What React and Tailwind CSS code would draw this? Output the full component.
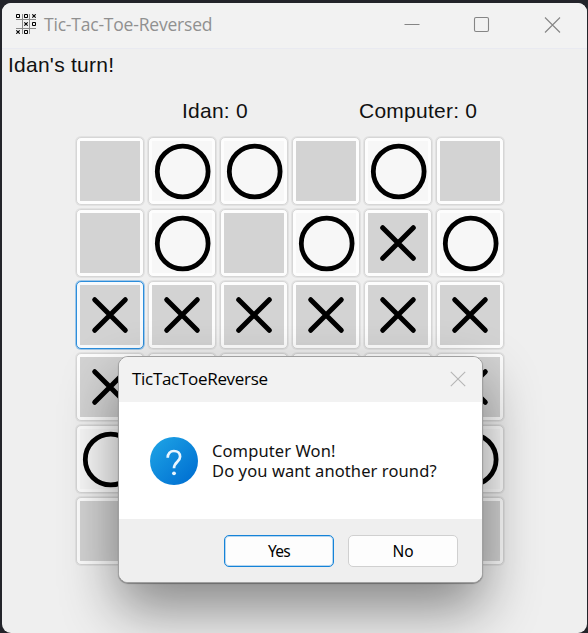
import React from 'react';

const board = [
  ' OO O ',
  ' O OXO',
  'XXXXXX',
  'XXXXXX',
  'O OO O',
  '      ',
];

function Cell({ mark, focused }) {
  return (
    <div
      className={
        'h-[68px] w-[68px] rounded-[5px] border p-[3px] ' +
        (focused
          ? 'border-[#2b8ddb] bg-[#f7fafd] ring-1 ring-[#2b8ddb]/40'
          : 'border-[#d6d6d6] bg-[#fdfdfd] ring-1 ring-[#cfcfcf]/40')
      }
    >
      <div className={'h-[60px] w-[60px] ' + (mark === 'O' ? 'bg-[#f7f7f7]' : 'bg-[#d3d3d3]')}>
        {mark !== ' ' && (
          <svg viewBox="0 0 60 60" className="block h-[60px] w-[60px]" fill="none" stroke="#000" strokeLinecap="round">
            {mark === 'O' ? (
              <circle cx="30.7" cy="30.5" r="25.4" strokeWidth="4.8" />
            ) : (
              <path d="M14.7 14.7 45.3 45.3M45.3 14.7 14.7 45.3" strokeWidth="5" />
            )}
          </svg>
        )}
      </div>
    </div>
  );
}

function AppIcon() {
  return (
    <svg viewBox="0 0 20 20" className="mb-[3px] block h-5 w-5" fill="none" stroke="#000">
      <path d="M6.5 0V20M13.5 0V20M0 5.5H20M0 14.5H20" stroke="#8a8a8a" strokeWidth="1" />
      <path d="M.5.5h3v3h-3zM8.5.5h3v3h-3zM16.5 8.5h3v3h-3zM8.5 16.5h3v3h-3z" strokeWidth="1" />
      <path d="M16.3.3l3.4 3.4M19.7.3l-3.4 3.4M8.3 8.3l3.4 3.4M11.7 8.3l-3.4 3.4M.3 16.3l3.4 3.4M3.7 16.3l-3.4 3.4" strokeWidth="1.1" />
    </svg>
  );
}

function Dialog() {
  return (
    <div className="absolute left-[116px] top-[353px] flex h-[227px] w-[365px] flex-col overflow-hidden rounded-[10px] border border-[#a0a0a0] bg-white shadow-[0_1px_1px_rgba(0,0,0,0.3),0_26px_56px_rgba(0,0,0,0.44)]">
      <div className="flex h-[45px] shrink-0 items-center justify-between bg-[#f2f2f2] pl-[13px] pr-4">
        <span className="mb-[2px] whitespace-nowrap font-['Open_Sans',sans-serif] text-[17px] tracking-[-0.3px] text-black">TicTacToeReverse</span>
        <svg viewBox="0 0 16 16" className="mb-[2px] h-4 w-4" stroke="#b5b5b5" strokeWidth="1.1">
          <path d="M.8.8 15.2 15.2M15.2.8.8 15.2" />
        </svg>
      </div>
      <div className="flex h-[117px] shrink-0 items-center pl-[31px]">
        <svg viewBox="0 0 48 48" className="h-12 w-12 shrink-0">
          <defs>
            <linearGradient id="info" x1="0" y1="0" x2="1" y2="1">
              <stop offset="0.1" stopColor="#1ca0e4" />
              <stop offset="0.9" stopColor="#0070d2" />
            </linearGradient>
          </defs>
          <circle cx="24" cy="24" r="24" fill="url(#info)" />
          <path d="M17.7 20.8c0-4.2 2.4-6.8 6.2-6.8s6.2 2.3 6.2 5.8c0 4.8-6.1 5.2-6.1 11.4" fill="none" stroke="#e9f6ff" strokeWidth="2.7" />
          <circle cx="24" cy="36.3" r="1.9" fill="#e9f6ff" />
        </svg>
        <div className="ml-[14px] whitespace-nowrap font-['Noto_Sans',sans-serif] text-[16.5px] leading-[20px] tracking-[0.1px] text-[#111]">
          <div>Computer Won!</div>
          <div>Do you want another round?</div>
        </div>
      </div>
      <div className="flex flex-1 items-start justify-end gap-[14px] bg-[#efefef] pr-6 pt-4 font-['Noto_Sans',sans-serif] text-[15.5px] text-black">
        <button className="h-8 w-[110px] rounded-[5px] border border-[#1583d8] bg-[#fdfdfd] leading-[31px] tracking-[-0.8px] ring-1 ring-inset ring-[#b5d6f0]">Yes</button>
        <button className="h-8 w-[110px] rounded-[5px] border border-[#d0d0d0] bg-[#fdfdfd] leading-[31px]">No</button>
      </div>
    </div>
  );
}

export default function App() {
  return (
    <div className="h-[633px] w-[588px] overflow-hidden bg-[#23242a] pl-[2px] pr-px pt-[3px]">
      <div className="relative h-[630px] overflow-hidden rounded-[9px] bg-[#efefef]">
        <header className="flex h-[46px] items-center border-b border-[#e9eaf1] bg-[#f2f2f2] pl-[14px]">
          <AppIcon />
          <span className="mb-[2px] ml-2 whitespace-nowrap font-['Open_Sans',sans-serif] text-[17.5px] tracking-[-0.2px] text-[#909090]">Tic-Tac-Toe-Reversed</span>
          <svg viewBox="0 0 160 18" className="mb-[2px] ml-auto mr-[25px] h-[18px] w-[160px]" fill="none" stroke="#858585" strokeWidth="1.1">
            <path d="M2.5 8.5h15M143 1.5l15 15M158 1.5l-15 15" />
            <rect x="72.5" y="1.5" width="14" height="14" rx="1.5" />
          </svg>
        </header>
        <div className="h-[46px] whitespace-nowrap pl-[6px] pt-[4px] font-['Liberation_Sans',sans-serif] text-[21px] leading-6 tracking-[0.25px] text-[#111]">Idan's turn!</div>
        <div className="flex h-[42px] whitespace-nowrap pl-[180px] pt-[4px] font-['Liberation_Sans',sans-serif] text-[21px] leading-6 tracking-[0.25px] text-[#111]">
          <span className="w-[177px]">Idan: 0</span>
          <span>Computer: 0</span>
        </div>
        <div className="ml-[74px] grid w-[428px] grid-cols-6 gap-1">
          {board.flatMap((row, r) =>
            row.split('').map((mark, c) => <Cell key={r + '-' + c} mark={mark} focused={r === 2 && c === 0} />)
          )}
        </div>
        <Dialog />
      </div>
    </div>
  );
}
